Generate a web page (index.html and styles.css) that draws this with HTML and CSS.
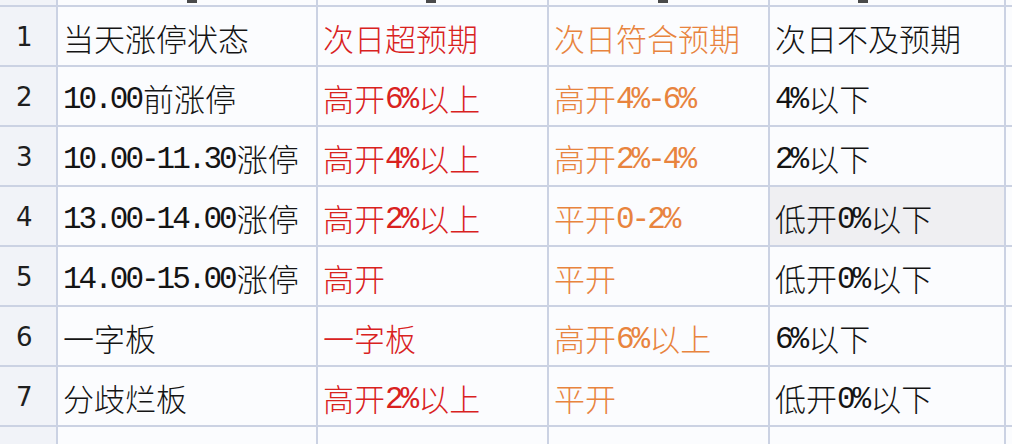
FILE: index.html
```html
<!DOCTYPE html>
<html lang="zh-CN">
<head>
<meta charset="utf-8">
<title>涨停预期</title>
<link rel="stylesheet" href="styles.css">
</head>
<body>
<div class="sheet">
  <div class="hd top"></div>
  <div class="c top"><span class="tick t1"></span></div>
  <div class="c top"><span class="tick t2"></span></div>
  <div class="c top"><span class="tick t3"></span></div>
  <div class="c top"><span class="tick t4"></span></div>
  <div class="c top"></div>

  <div class="hd">1</div>
  <div class="c">当天涨停状态</div>
  <div class="c red">次日超预期</div>
  <div class="c org">次日符合预期</div>
  <div class="c">次日不及预期</div>
  <div class="c"></div>

  <div class="hd">2</div>
  <div class="c"><span class="n">10.00</span>前涨停</div>
  <div class="c red">高开<span class="n">6%</span>以上</div>
  <div class="c org">高开<span class="n">4%-6%</span></div>
  <div class="c"><span class="n">4%</span>以下</div>
  <div class="c"></div>

  <div class="hd">3</div>
  <div class="c"><span class="n">10.00-11.30</span>涨停</div>
  <div class="c red">高开<span class="n">4%</span>以上</div>
  <div class="c org">高开<span class="n">2%-4%</span></div>
  <div class="c"><span class="n">2%</span>以下</div>
  <div class="c"></div>

  <div class="hd">4</div>
  <div class="c"><span class="n">13.00-14.00</span>涨停</div>
  <div class="c red">高开<span class="n">2%</span>以上</div>
  <div class="c org">平开<span class="n">0-2%</span></div>
  <div class="c sel">低开<span class="n">0%</span>以下</div>
  <div class="c"></div>

  <div class="hd">5</div>
  <div class="c"><span class="n">14.00-15.00</span>涨停</div>
  <div class="c red">高开</div>
  <div class="c org">平开</div>
  <div class="c">低开<span class="n">0%</span>以下</div>
  <div class="c"></div>

  <div class="hd">6</div>
  <div class="c">一字板</div>
  <div class="c red">一字板</div>
  <div class="c org">高开<span class="n">6%</span>以上</div>
  <div class="c"><span class="n">6%</span>以下</div>
  <div class="c"></div>

  <div class="hd">7</div>
  <div class="c">分歧烂板</div>
  <div class="c red">高开<span class="n">2%</span>以上</div>
  <div class="c org">平开</div>
  <div class="c">低开<span class="n">0%</span>以下</div>
  <div class="c"></div>

  <div class="hd"></div>
  <div class="c"></div>
  <div class="c"></div>
  <div class="c"></div>
  <div class="c"></div>
  <div class="c"></div>
</div>
</body>
</html>
```

FILE: styles.css
```css
html, body {
  margin: 0;
  padding: 0;
  background: #fbfcfe;
}
body {
  width: 1012px;
  height: 444px;
  overflow: hidden;
}
.sheet {
  display: grid;
  grid-template-columns: 56px 258px 229px 219px 234px 1fr;
  grid-template-rows: 5px repeat(7, 58px) 1fr;
  gap: 2px;
  width: 1012px;
  height: 444px;
  background: #cbd2e3;
}
.c, .hd {
  display: flex;
  align-items: center;
  overflow: hidden;
  white-space: nowrap;
}
.c {
  background: #fbfcfe;
  padding-left: 5px;
  font-family: "Noto Sans CJK SC", sans-serif;
  font-weight: 300;
  font-size: 31px;
  color: #141414;
  padding-top: 2px;
  box-sizing: border-box;
}
.hd {
  background: #f1f3f8;
  padding-left: 16px;
  font-family: "DejaVu Sans", "Liberation Sans", sans-serif;
  font-size: 26px;
  color: #1e1e1e;
  box-sizing: border-box;
  padding-top: 2px;
}
.top {
  align-items: flex-start;
  padding-top: 0;
}
.n {
  font-family: "Liberation Mono", monospace;
  font-weight: 400;
  font-size: 31px;
  letter-spacing: -3px;
  margin-right: 2px;
  position: relative;
  top: 2px;
}
.red { color: #d9221e; }
.org { color: #e8843e; }
.sel { background: #efeff2; }
.tick {
  display: block;
  width: 10px;
  height: 3px;
  background: #4a4a4a;
}
.t1 { margin-left: 124px; }
.t2 { margin-left: 103px; }
.t3 { margin-left: 104px; }
.t4 { margin-left: 83px; }
```
